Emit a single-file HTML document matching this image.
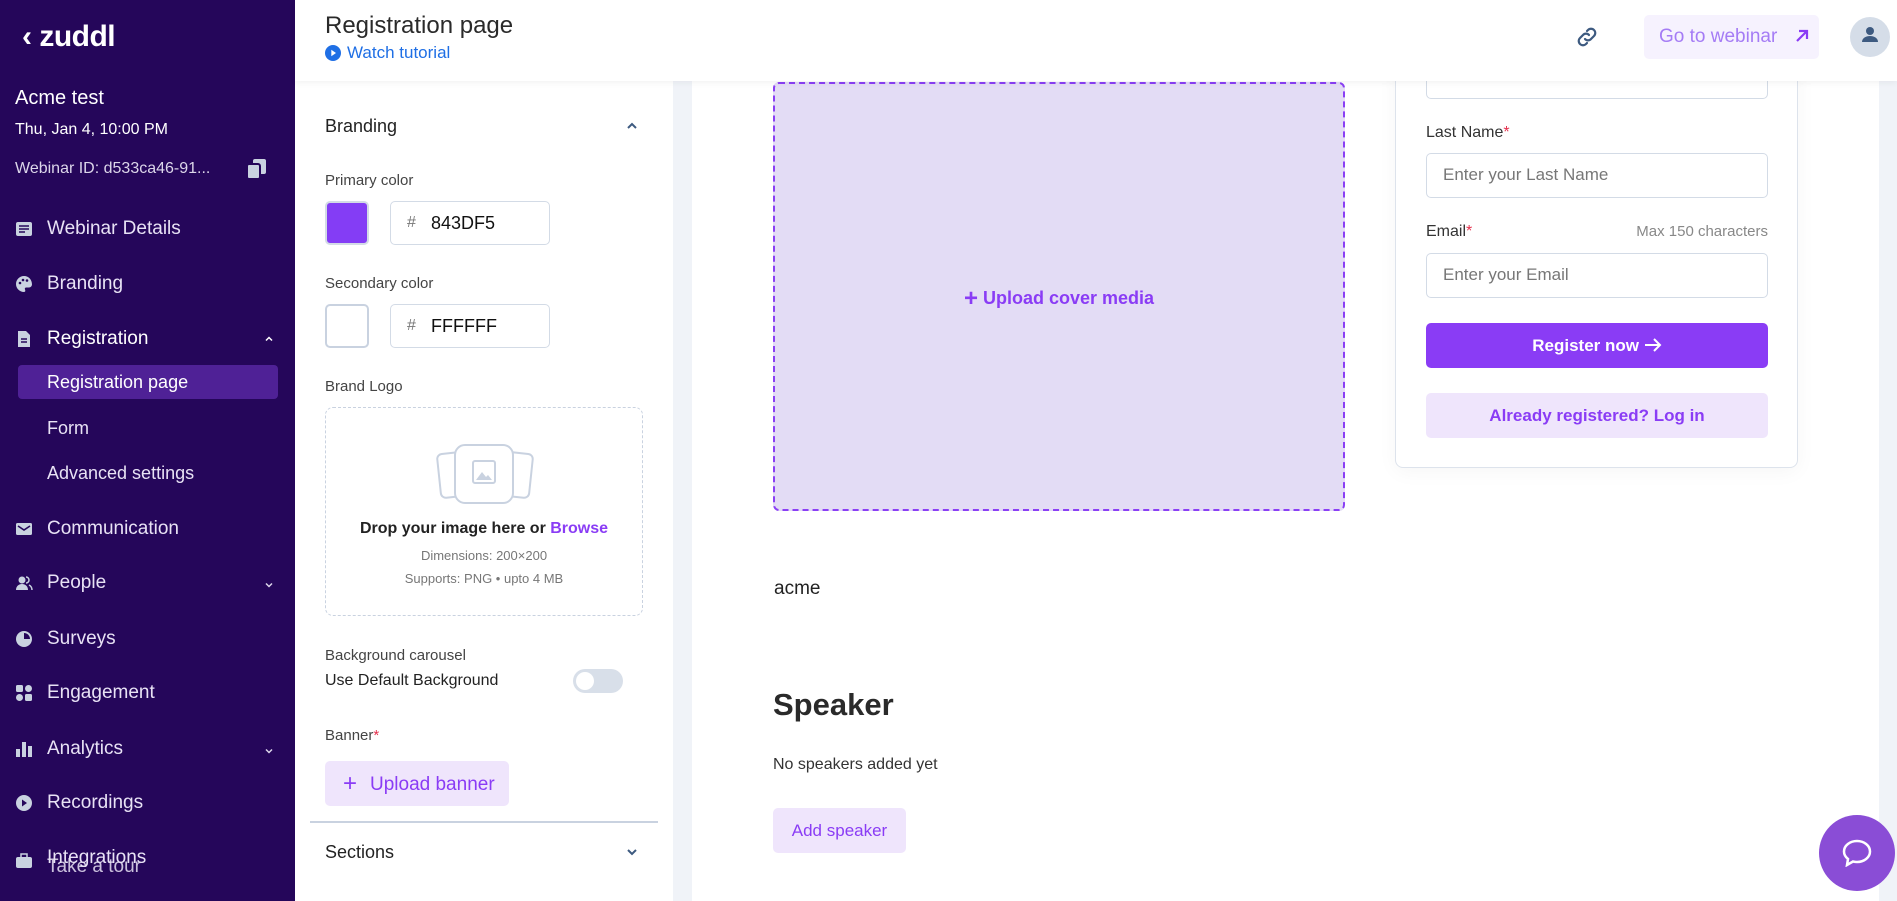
<!DOCTYPE html>
<html><head><meta charset="utf-8"><style>
*{box-sizing:border-box;margin:0;padding:0}
body{width:1897px;height:901px;overflow:hidden;font-family:"Liberation Sans",sans-serif;background:#fff;position:relative}
.a{position:absolute}
.sb{left:0;top:0;width:295px;height:901px;background:#25065a;color:#fff}
.nav{position:absolute;left:47px;font-size:19px;color:#e8e2f5;line-height:1}
.ic{position:absolute;left:15px;width:18px;height:18px}
.chev{position:absolute;left:264px;width:10px;height:10px}
.lbl{position:absolute;font-size:15px;color:#444}
.inp{position:absolute;border:1.5px solid #d3dbe6;border-radius:5px;background:#fff}
</style></head><body>
<div class="a sb">
  <div class="a" style="left:22px;top:20px;font-size:30px;font-weight:bold;letter-spacing:-0.5px">‹ zuddl</div>
  <div class="a" style="left:15px;top:87px;font-size:20px">Acme test</div>
  <div class="a" style="left:15px;top:121px;font-size:16px">Thu, Jan 4, 10:00 PM</div>
  <div class="a" style="left:15px;top:160px;font-size:16px;color:#dcd6ea">Webinar ID: d533ca46-91...</div>
  <svg class="a" style="left:246px;top:158px" width="22" height="22" viewBox="0 0 22 22"><rect x="7" y="1" width="13" height="15" rx="2" fill="#c9d2e0"/><rect x="1" y="6" width="13" height="15" rx="2" fill="#c9d2e0" stroke="#25065a" stroke-width="2"/></svg>

  <svg class="ic" style="top:220px" viewBox="0 0 18 18"><rect x="1" y="2" width="16" height="14" rx="2" fill="#c9d2e0"/><path d="M4 6h10M4 9h10M4 12h6" stroke="#25065a" stroke-width="1.5"/></svg>
  <div class="nav" style="top:219px">Webinar Details</div>
  <svg class="ic" style="top:275px" viewBox="0 0 18 18"><path d="M9 1a8 8 0 0 0 0 16c1.5 0 1.5-1.5 1-2.5s0-2 1.5-2H14a3 3 0 0 0 3-3C17 4.5 13.5 1 9 1z" fill="#c9d2e0"/><circle cx="5" cy="8" r="1.3" fill="#25065a"/><circle cx="8" cy="5" r="1.3" fill="#25065a"/><circle cx="12" cy="5.5" r="1.3" fill="#25065a"/></svg>
  <div class="nav" style="top:274px">Branding</div>
  <svg class="ic" style="top:330px" viewBox="0 0 18 18"><path d="M3 1h8l4 4v12H3z" fill="#c9d2e0"/><path d="M6 9h6M6 12h6" stroke="#25065a" stroke-width="1.5"/></svg>
  <div class="nav" style="top:329px;color:#fff">Registration</div>
  <svg class="chev" style="top:334px" viewBox="0 0 10 10"><path d="M2 6.5l3-3 3 3" stroke="#fff" stroke-width="1.5" fill="none"/></svg>
  <div class="a" style="left:18px;top:365px;width:260px;height:34px;background:#4f2196;border-radius:4px"></div>
  <div class="nav" style="top:373px;color:#fff;font-size:18px">Registration page</div>
  <div class="nav" style="top:419px;font-size:18px">Form</div>
  <div class="nav" style="top:464px;font-size:18px">Advanced settings</div>
  <svg class="ic" style="top:520px" viewBox="0 0 18 18"><rect x="1" y="3" width="16" height="12" rx="1.5" fill="#c9d2e0"/><path d="M3 6l6 4 6-4" stroke="#25065a" stroke-width="1.6" fill="none"/></svg>
  <div class="nav" style="top:519px">Communication</div>
  <svg class="ic" style="top:574px" viewBox="0 0 18 18"><circle cx="7" cy="6" r="3.5" fill="#c9d2e0"/><path d="M1 16c0-4 3-6 6-6s6 2 6 6z" fill="#c9d2e0"/><path d="M11 3a3 3 0 0 1 0 6M14 11c2 1 3 3 3 5" stroke="#c9d2e0" stroke-width="1.5" fill="none"/></svg>
  <div class="nav" style="top:573px">People</div>
  <svg class="chev" style="top:580px" viewBox="0 0 10 10"><path d="M2 3.5l3 3 3-3" stroke="#dcd6ea" stroke-width="1.5" fill="none"/></svg>
  <svg class="ic" style="top:630px" viewBox="0 0 18 18"><circle cx="9" cy="9" r="8" fill="#c9d2e0"/><path d="M9 9V3a6 6 0 0 1 6 6z" fill="#25065a"/></svg>
  <div class="nav" style="top:629px">Surveys</div>
  <svg class="ic" style="top:684px" viewBox="0 0 18 18"><rect x="1" y="1" width="7" height="7" rx="1.5" fill="#c9d2e0"/><circle cx="13.5" cy="4.5" r="3.5" fill="#c9d2e0"/><circle cx="4.5" cy="13.5" r="3.5" fill="#c9d2e0"/><rect x="10" y="10" width="7" height="7" rx="1.5" fill="#c9d2e0"/></svg>
  <div class="nav" style="top:683px">Engagement</div>
  <svg class="ic" style="top:740px" viewBox="0 0 18 18"><rect x="1" y="9" width="4" height="8" fill="#c9d2e0"/><rect x="7" y="2" width="4" height="15" fill="#c9d2e0"/><rect x="13" y="6" width="4" height="11" fill="#c9d2e0"/></svg>
  <div class="nav" style="top:739px">Analytics</div>
  <svg class="chev" style="top:746px" viewBox="0 0 10 10"><path d="M2 3.5l3 3 3-3" stroke="#dcd6ea" stroke-width="1.5" fill="none"/></svg>
  <svg class="ic" style="top:794px" viewBox="0 0 18 18"><circle cx="9" cy="9" r="8" fill="#c9d2e0"/><path d="M7 5.5v7l5-3.5z" fill="#25065a"/></svg>
  <div class="nav" style="top:793px">Recordings</div>
  <svg class="ic" style="top:852px" viewBox="0 0 18 18"><rect x="1" y="5" width="16" height="11" rx="2" fill="#c9d2e0"/><path d="M6 5V2h6v3" stroke="#c9d2e0" stroke-width="1.5" fill="none"/></svg>
  <div class="nav" style="top:848px">Integrations</div>
  <div class="nav" style="top:857px;opacity:.85">Take a tour</div>
</div>

<!-- header -->
<div class="a" style="left:295px;top:0;width:1602px;height:81px;background:#fff;box-shadow:0 2px 6px rgba(0,0,0,.05);z-index:5">
  <div class="a" style="left:30px;top:12px;font-size:24px;color:#2a2a2a">Registration page</div>
  <svg class="a" style="left:30px;top:45px" width="16" height="16" viewBox="0 0 16 16"><circle cx="8" cy="8" r="8" fill="#1f6fe5"/><path d="M6.3 4.8v6.4L11 8z" fill="#fff"/></svg>
  <div class="a" style="left:52px;top:43px;font-size:17px;color:#1f6fe5">Watch tutorial</div>
  <svg class="a" style="left:1280px;top:25px" width="24" height="24" viewBox="0 0 24 24"><path d="M10 14a4 4 0 0 0 6 0l3-3a4 4 0 0 0-6-6l-1 1M14 10a4 4 0 0 0-6 0l-3 3a4 4 0 0 0 6 6l1-1" stroke="#3d5a80" stroke-width="2.2" fill="none" stroke-linecap="round"/></svg>
  <div class="a" style="left:1349px;top:15px;width:175px;height:44px;background:#f6f2fe;border-radius:5px"></div>
  <div class="a" style="left:1364px;top:26px;font-size:19px;color:#a57cf5">Go to webinar</div>
  <svg class="a" style="left:1499px;top:28px" width="16" height="16" viewBox="0 0 16 16"><path d="M3 13L13 3M5 3h8v8" stroke="#8a3cf5" stroke-width="2.2" fill="none"/></svg>
  <div class="a" style="left:1555px;top:17px;width:40px;height:40px;border-radius:50%;background:#d5dde8"></div>
  <svg class="a" style="left:1566px;top:26px" width="18" height="20" viewBox="0 0 18 20"><circle cx="9" cy="5" r="4" fill="#3d5a80"/><path d="M1 16c0-4 4-6 8-6s8 2 8 6z" fill="#3d5a80"/></svg>
</div>

<!-- left panel -->
<div class="a" style="left:295px;top:81px;width:378px;height:820px;background:#fff">
  <div class="a" style="left:30px;top:35px;font-size:18px;color:#222">Branding</div>
  <svg class="a" style="left:330px;top:39px" width="14" height="12" viewBox="0 0 14 12"><path d="M3 8l4-4 4 4" stroke="#3d5a80" stroke-width="2" fill="none"/></svg>
  <div class="lbl" style="left:30px;top:91px">Primary color</div>
  <div class="a" style="left:30px;top:120px;width:44px;height:44px;border-radius:5px;background:#843df5;border:2px solid #d3dbe6"></div>
  <div class="inp" style="left:95px;top:120px;width:160px;height:44px"><span class="a" style="left:16px;top:12px;color:#777;font-size:16px">#</span><span class="a" style="left:40px;top:11px;font-size:18px;color:#111">843DF5</span></div>
  <div class="lbl" style="left:30px;top:194px">Secondary color</div>
  <div class="a" style="left:30px;top:223px;width:44px;height:44px;border-radius:5px;background:#fff;border:2px solid #c9d2e0"></div>
  <div class="inp" style="left:95px;top:223px;width:160px;height:44px"><span class="a" style="left:16px;top:12px;color:#777;font-size:16px">#</span><span class="a" style="left:40px;top:11px;font-size:18px;color:#111">FFFFFF</span></div>
  <div class="lbl" style="left:30px;top:297px">Brand Logo</div>
  <div class="a" style="left:30px;top:326px;width:318px;height:209px;border:1.5px dashed #c9d2e0;border-radius:8px"></div>
  <svg class="a" style="left:140px;top:360px" width="100" height="70" viewBox="0 0 100 70"><rect x="4" y="12" width="26" height="44" rx="5" fill="#fff" stroke="#c9d2e0" stroke-width="2" transform="rotate(-6 17 34)"/><rect x="70" y="12" width="26" height="44" rx="5" fill="#fff" stroke="#c9d2e0" stroke-width="2" transform="rotate(6 83 34)"/><rect x="20" y="4" width="58" height="58" rx="10" fill="#fff" stroke="#c9d2e0" stroke-width="2"/><rect x="38" y="20" width="22" height="22" rx="2" fill="none" stroke="#c9d2e0" stroke-width="2"/><path d="M41 39l6-8 4 5 2-2 4 5z" fill="#c9d2e0"/></svg>
  <div class="a" style="left:30px;top:439px;width:318px;text-align:center;font-size:16px;font-weight:bold;color:#222">Drop your image here or <span style="color:#8a3cf5">Browse</span></div>
  <div class="a" style="left:30px;top:467px;width:318px;text-align:center;font-size:13px;color:#777">Dimensions: 200×200</div>
  <div class="a" style="left:30px;top:490px;width:318px;text-align:center;font-size:13px;color:#777">Supports: PNG • upto 4 MB</div>
  <div class="lbl" style="left:30px;top:566px">Background carousel</div>
  <div class="a" style="left:30px;top:591px;font-size:16px;color:#222">Use Default Background</div>
  <div class="a" style="left:278px;top:588px;width:50px;height:24px;border-radius:12px;background:#d8dfe9"></div>
  <div class="a" style="left:281px;top:591px;width:18px;height:18px;border-radius:50%;background:#fff"></div>
  <div class="lbl" style="left:30px;top:646px">Banner<span style="color:#e5304d">*</span></div>
  <div class="a" style="left:30px;top:680px;width:184px;height:45px;background:#efe5fc;border-radius:5px"></div>
  <div class="a" style="left:48px;top:689px;font-size:24px;color:#8a3cf5">+</div>
  <div class="a" style="left:75px;top:693px;font-size:19px;color:#8a3cf5">Upload banner</div>
  <div class="a" style="left:15px;top:740px;width:348px;height:1.5px;background:#c9d2e0"></div>
  <div class="a" style="left:30px;top:761px;font-size:18px;color:#222">Sections</div>
  <svg class="a" style="left:330px;top:765px" width="14" height="12" viewBox="0 0 14 12"><path d="M3 4l4 4 4-4" stroke="#3d5a80" stroke-width="2" fill="none"/></svg>
</div>
<div class="a" style="left:673px;top:81px;width:19px;height:820px;background:#f0f3f8"></div>
<div class="a" style="left:1879px;top:81px;width:18px;height:820px;background:#f0f3f8"></div>

<!-- main -->
<div class="a" style="left:773px;top:82px;width:572px;height:429px;background:#e3dcf5;border:2px dashed #8a3ff5;border-radius:6px"></div>
<div class="a" style="left:773px;top:285px;width:572px;text-align:center;font-size:18px;font-weight:600;color:#8a3cf5"><span style="font-size:24px;vertical-align:-2px">+</span> Upload cover media</div>

<div class="a" style="left:1395px;top:40px;width:403px;height:428px;border:1.5px solid #dde3ec;border-radius:8px;background:#fff;box-shadow:0 4px 20px rgba(0,0,0,.04)"></div>
<div class="inp" style="left:1426px;top:50px;width:342px;height:49px"></div>
<div class="a" style="left:1426px;top:124px;font-size:16px;color:#333">Last Name<span style="color:#e5304d">*</span></div>
<div class="inp" style="left:1426px;top:153px;width:342px;height:45px"><span class="a" style="left:16px;top:11px;font-size:17px;color:#777">Enter your Last Name</span></div>
<div class="a" style="left:1426px;top:223px;font-size:16px;color:#333">Email<span style="color:#e5304d">*</span></div>
<div class="a" style="left:1500px;top:223px;width:268px;text-align:right;font-size:15px;color:#888">Max 150 characters</div>
<div class="inp" style="left:1426px;top:253px;width:342px;height:45px"><span class="a" style="left:16px;top:11px;font-size:17px;color:#777">Enter your Email</span></div>
<div class="a" style="left:1426px;top:323px;width:342px;height:45px;background:#8a3cf5;border-radius:5px;color:#fff;font-weight:bold;font-size:17px;text-align:center;line-height:45px">Register now <svg width="18" height="14" viewBox="0 0 18 14" style="vertical-align:-1px"><path d="M1 7h15M10 1l6 6-6 6" stroke="#fff" stroke-width="2" fill="none"/></svg></div>
<div class="a" style="left:1426px;top:393px;width:342px;height:45px;background:#efe5fc;border-radius:5px;color:#8a3cf5;font-weight:bold;font-size:17px;text-align:center;line-height:45px">Already registered? Log in</div>

<div class="a" style="left:774px;top:578px;font-size:19px;color:#222">acme</div>
<div class="a" style="left:773px;top:687px;font-size:31px;font-weight:bold;color:#2a2a2a">Speaker</div>
<div class="a" style="left:773px;top:756px;font-size:16px;color:#333">No speakers added yet</div>
<div class="a" style="left:773px;top:808px;width:133px;height:45px;background:#efe5fc;border-radius:5px;color:#8a3cf5;font-size:17px;text-align:center;line-height:45px">Add speaker</div>

<div class="a" style="left:1819px;top:815px;width:76px;height:76px;border-radius:50%;background:#8a4dd6;z-index:6"></div>
<svg class="a" style="left:1842px;top:839px;z-index:7" width="30" height="28" viewBox="0 0 30 28"><path d="M15 2C8 2 2 6.5 2 12.5c0 3 1.5 5.5 4 7.5l-1 6 6-3.5c1.3.3 2.6.5 4 .5 7 0 13-4.5 13-10.5S22 2 15 2z" fill="none" stroke="#fff" stroke-width="2.5"/></svg>
</body></html>
